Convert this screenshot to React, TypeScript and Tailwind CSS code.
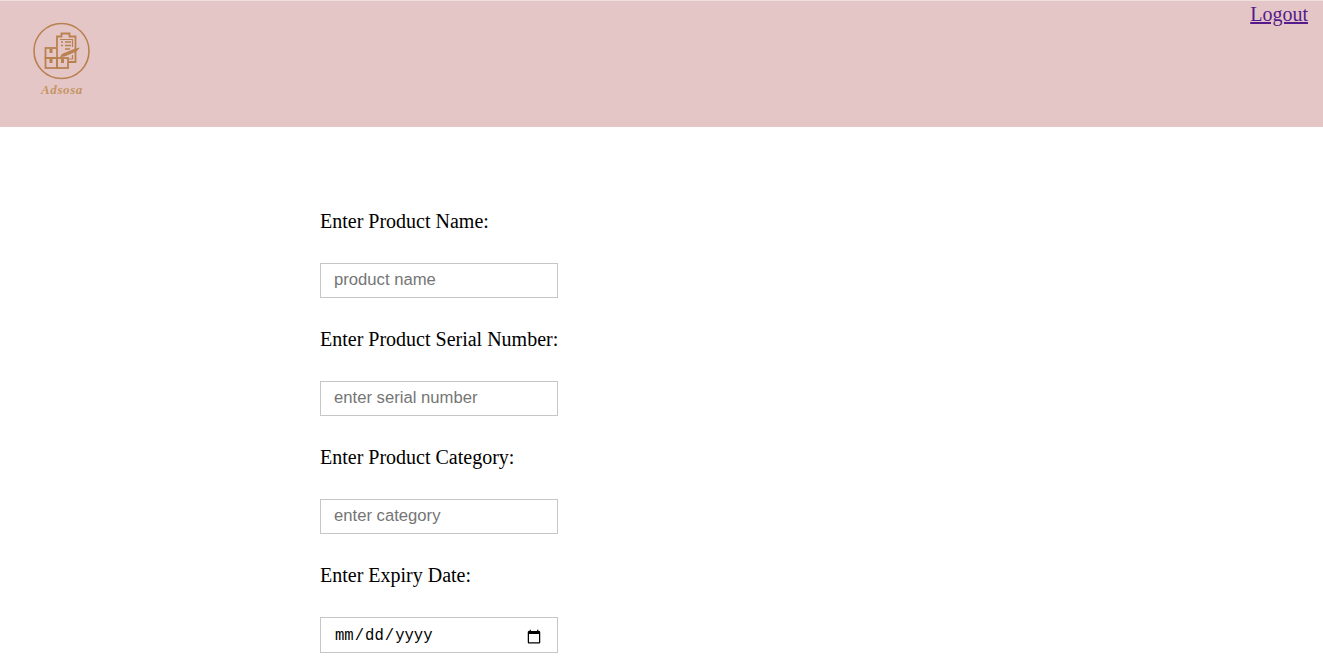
export default function App() {
  const fields = [
    { label: "Enter Product Name:", type: "text", placeholder: "product name" },
    { label: "Enter Product Serial Number:", type: "text", placeholder: "enter serial number" },
    { label: "Enter Product Category:", type: "text", placeholder: "enter category" },
    { label: "Enter Expiry Date:", type: "date", placeholder: "" },
  ];
  return (
    <div className="min-h-[662px] bg-white font-['Liberation_Serif',serif] text-black">
      <header className="flex h-[127px] items-start justify-between border-t border-t-[#f0dfdf] bg-[#e4c6c7] pl-[33px] pr-[15px]">
        <div className="mt-[21px] flex w-[58px] flex-col items-center">
          <svg width="58" height="58" viewBox="0 0 58 58" fill="none" stroke="#b9814f" strokeWidth="1.6">
            <circle cx="28.500" cy="29" r="27.500" />
            <path d="M24 25V14.500h4.500V11.500h8V14.500h6V40h-7" strokeWidth="1.8" />
            <path d="M27 17.500h12.500V25M39.500 33V37H36" strokeWidth="1.2" />
            <path d="M28 20h2M32 20h6M28 23.500h2M32 23.500h6M32 27h5" strokeWidth="1.7" />
            <rect x="12.500" y="26" width="11.500" height="10" strokeWidth="1.8" />
            <rect x="12.500" y="36" width="11.500" height="10" strokeWidth="1.8" />
            <rect x="24" y="36" width="11" height="10" strokeWidth="1.800" />
            <path d="M18 27v4M18 37v4M29.500 37v4" strokeWidth="3" />
            <path d="M27 35l2-3 12-5 6-1.500-3.500 4-12 5z" fill="#b9814f" stroke="none" />
          </svg>
          <span className="mt-[2px] text-[13px] leading-[15px] font-bold tracking-[0.6px] text-[#c4945f] italic">Adsosa</span>
        </div>
        <a href="#" className="mt-[2px] text-[20px] leading-[23px] text-[#551a8b] underline">Logout</a>
      </header>
      <main className="flex flex-col items-start pt-[83px] pl-[320px]">
        {fields.map((f) => (
          <div key={f.label} className="flex w-[238px] flex-col">
            <label className="mb-[30px] text-[20px] leading-[23px] whitespace-nowrap">{f.label}</label>
            <input
              type={f.type}
              placeholder={f.placeholder}
              className={
                "w-[238px] border border-[#c6c6c6] bg-white px-[13px] outline-none placeholder:text-[#757575] " +
                (f.type === "date"
                  ? "mb-0 h-[36px] pt-[3px] font-['Liberation_Mono',monospace] text-[15.6px]"
                  : "mb-[30px] h-[35px] pb-[2px] font-['Liberation_Sans',sans-serif] text-[16.67px]")
              }
            />
          </div>
        ))}
      </main>
    </div>
  );
}
